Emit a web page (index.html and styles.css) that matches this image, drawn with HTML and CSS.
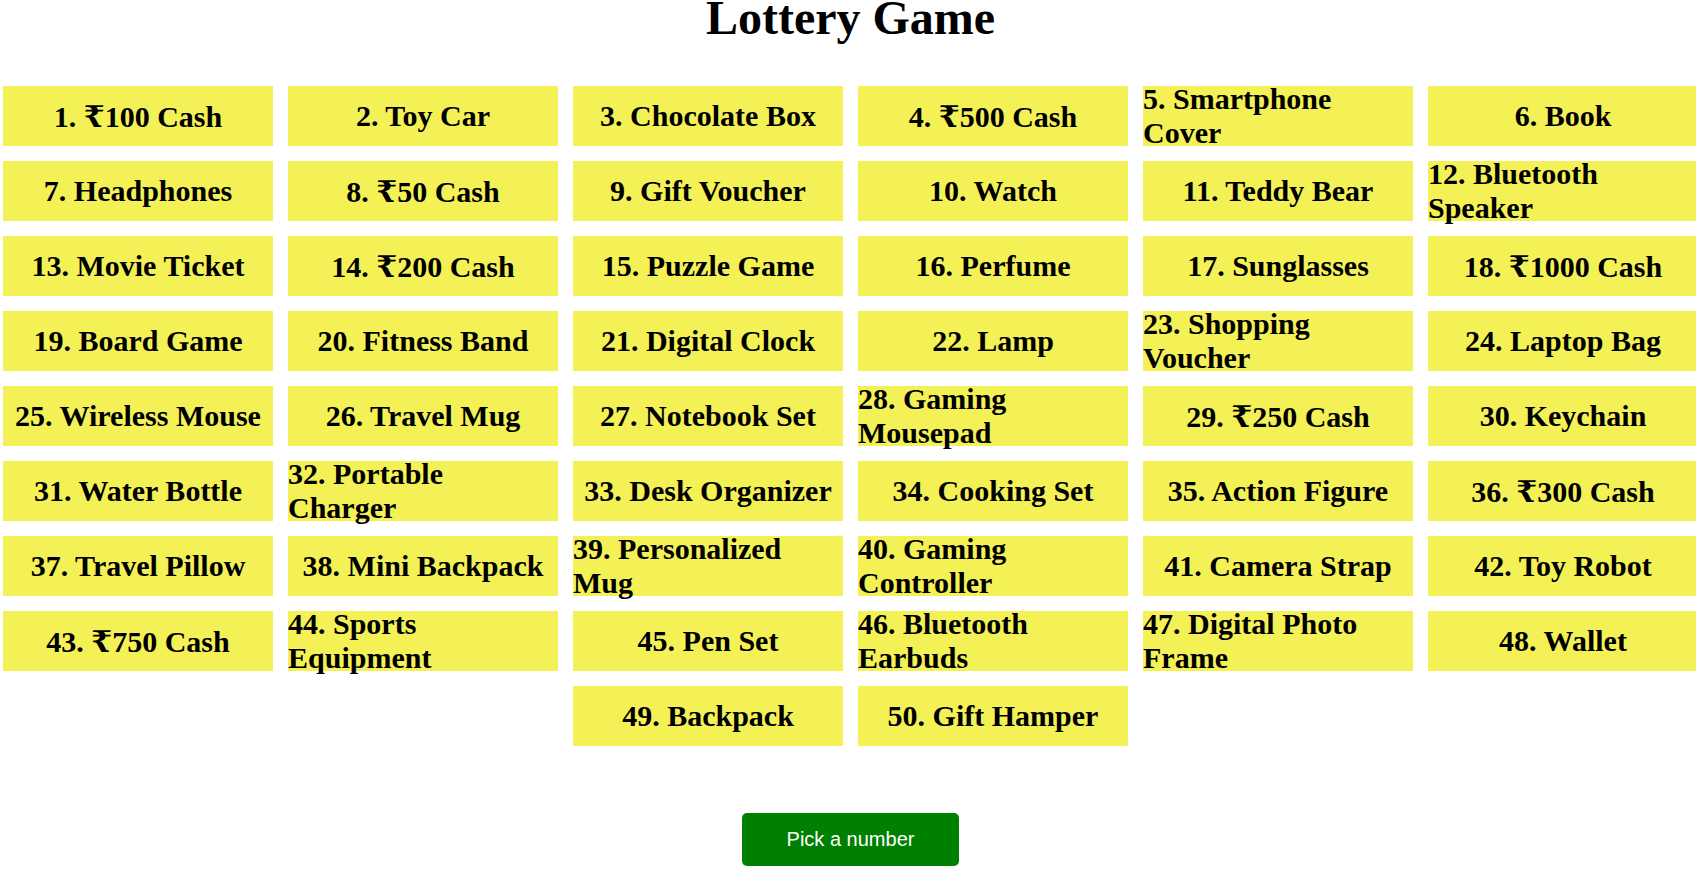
FILE: index.html
```html
<!DOCTYPE html>
<html lang="en">
<head>
<meta charset="utf-8">
<title>Lottery Game</title>
<link rel="stylesheet" href="styles.css">
</head>
<body>
<div class="page">
  <h1 class="title">Lottery Game</h1>
  <div class="board">
    <div class="cell">1. ₹100 Cash</div>
    <div class="cell">2. Toy Car</div>
    <div class="cell">3. Chocolate Box</div>
    <div class="cell">4. ₹500 Cash</div>
    <div class="cell">5. Smartphone Cover</div>
    <div class="cell">6. Book</div>
    <div class="cell">7. Headphones</div>
    <div class="cell">8. ₹50 Cash</div>
    <div class="cell">9. Gift Voucher</div>
    <div class="cell">10. Watch</div>
    <div class="cell">11. Teddy Bear</div>
    <div class="cell">12. Bluetooth Speaker</div>
    <div class="cell">13. Movie Ticket</div>
    <div class="cell">14. ₹200 Cash</div>
    <div class="cell">15. Puzzle Game</div>
    <div class="cell">16. Perfume</div>
    <div class="cell">17. Sunglasses</div>
    <div class="cell">18. ₹1000 Cash</div>
    <div class="cell">19. Board Game</div>
    <div class="cell">20. Fitness Band</div>
    <div class="cell">21. Digital Clock</div>
    <div class="cell">22. Lamp</div>
    <div class="cell">23. Shopping Voucher</div>
    <div class="cell">24. Laptop Bag</div>
    <div class="cell">25. Wireless Mouse</div>
    <div class="cell">26. Travel Mug</div>
    <div class="cell">27. Notebook Set</div>
    <div class="cell">28. Gaming Mousepad</div>
    <div class="cell">29. ₹250 Cash</div>
    <div class="cell">30. Keychain</div>
    <div class="cell">31. Water Bottle</div>
    <div class="cell">32. Portable Charger</div>
    <div class="cell">33. Desk Organizer</div>
    <div class="cell">34. Cooking Set</div>
    <div class="cell">35. Action Figure</div>
    <div class="cell">36. ₹300 Cash</div>
    <div class="cell">37. Travel Pillow</div>
    <div class="cell">38. Mini Backpack</div>
    <div class="cell">39. Personalized Mug</div>
    <div class="cell">40. Gaming Controller</div>
    <div class="cell">41. Camera Strap</div>
    <div class="cell">42. Toy Robot</div>
    <div class="cell">43. ₹750 Cash</div>
    <div class="cell">44. Sports Equipment</div>
    <div class="cell">45. Pen Set</div>
    <div class="cell">46. Bluetooth Earbuds</div>
    <div class="cell">47. Digital Photo Frame</div>
    <div class="cell">48. Wallet</div>
    <div class="cell">49. Backpack</div>
    <div class="cell">50. Gift Hamper</div>
  </div>
  <button class="pick" type="button">Pick a number</button>
</div>
</body>
</html>
```

FILE: styles.css
```css
html, body {
  margin: 0;
  padding: 0;
  overflow-x: hidden;
  background: #ffffff;
}

.page {
  margin-left: 3px;
  width: 1695px;
  display: flex;
  flex-direction: column;
  align-items: center;
  font-family: "Liberation Serif", "DejaVu Serif", serif;
  color: #000000;
}

.title {
  margin: 0 0 50px;
  font-size: 48px;
  line-height: 36px;
  font-weight: bold;
  text-align: center;
}

.board {
  width: 1695px;
  display: flex;
  flex-wrap: wrap;
  justify-content: center;
  gap: 15px;
}

.cell {
  width: 270px;
  height: 60px;
  display: flex;
  align-items: center;
  justify-content: center;
  background: #f3f156;
  font-size: 30px;
  font-weight: bold;
  line-height: normal;
}

.pick {
  margin-top: 67px;
  padding: 15px 45px;
  border: none;
  border-radius: 5px;
  background: #008000;
  color: #ffffff;
  font-family: "Liberation Sans", Arial, sans-serif;
  font-size: 20px;
  line-height: 23px;
  cursor: pointer;
}
```
